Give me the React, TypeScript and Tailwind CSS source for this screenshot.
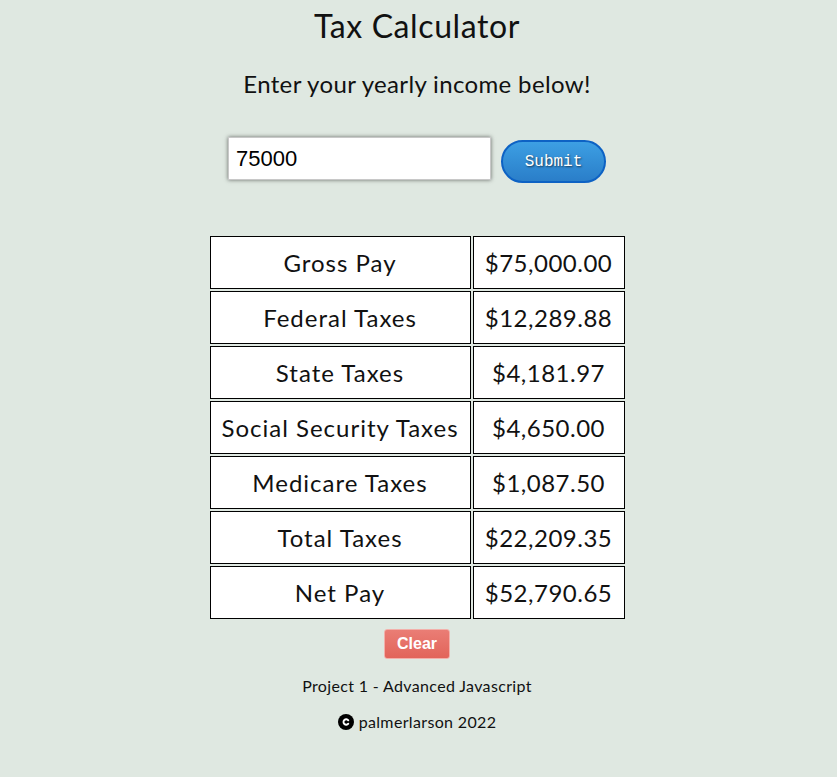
import React, { useState } from "react"

const fmt = (n: number) =>
  "$" + n.toLocaleString("en-US", { minimumFractionDigits: 2, maximumFractionDigits: 2 })

export default function App() {
  const [income, setIncome] = useState("75000")

  const rows: [string, number][] = [
    ["Gross Pay", 75000],
    ["Federal Taxes", 12289.88],
    ["State Taxes", 4181.97],
    ["Social Security Taxes", 4650],
    ["Medicare Taxes", 1087.5],
    ["Total Taxes", 22209.35],
    ["Net Pay", 52790.65],
  ]

  return (
    <div className="min-h-[777px] pr-[3px] bg-[#dfe8e1] text-[#111] flex flex-col items-center font-['Lato','Noto_Sans',sans-serif]">
      <h1 className="pt-[6px] text-[32px] leading-[40px] font-normal tracking-[0.6px]">Tax Calculator</h1>
      <p className="mt-[23px] text-[24px] leading-[30px] tracking-[0.35px]">Enter your yearly income below!</p>

      <form
        className="mt-[38px] flex items-start gap-[10px]"
        onSubmit={e => e.preventDefault()}
      >
        <input
          className="w-[263px] h-[43px] bg-white border border-[#c8c8c8] shadow-[0_0_4px_rgba(0,0,0,0.55)] px-[7px] text-[22px] font-['Liberation_Sans',Arial,sans-serif] text-black outline-none"
          value={income}
          onChange={e => setIncome(e.target.value)}
        />
        <button
          type="submit"
          className="mt-[3px] w-[105px] h-[43px] rounded-full border-2 border-[#0d62c4] bg-gradient-to-b from-[#3d9fe3] to-[#2a7ec9] text-white text-[16px] font-['Liberation_Mono','Courier_New',monospace] [text-shadow:1px_1px_2px_rgba(0,0,0,0.6)]"
        >
          Submit
        </button>
      </form>

      <div className="mt-[53px] grid grid-cols-[261px_152px] gap-[2px]">
        {rows.map(([label, value]) => (
          <React.Fragment key={label}>
            <div className="h-[53px] bg-white border border-black flex items-center justify-center text-[24px] tracking-[1px]">
              {label}
            </div>
            <div className="h-[53px] bg-white border border-black flex items-center justify-center text-[24px] tracking-[0.5px]">
              {fmt(value)}
            </div>
          </React.Fragment>
        ))}
      </div>

      <button
        type="button"
        className="mt-[10px] w-[66px] h-[30px] rounded-[3px] border border-[#f3b0aa] bg-gradient-to-b from-[#ea7d75] to-[#e2645a] text-white text-[16px] font-bold font-['Liberation_Sans',Arial,sans-serif]"
      >
        Clear
      </button>

      <p className="mt-[15px] text-[16px] leading-[24px] tracking-[0.35px]">Project 1 - Advanced Javascript</p>
      <p className="mt-[12px] text-[16px] leading-[24px] tracking-[0.35px] flex items-center gap-[5px]">
        <svg width="16" height="16" viewBox="0 0 16 16">
          <circle cx="8" cy="8" r="8" fill="#000" />
          <path
            d="M10.3 6.3A2.7 2.7 0 1 0 10.3 9.7"
            fill="none"
            stroke="#fff"
            strokeWidth="1.9"
            strokeLinecap="round"
          />
        </svg>
        palmerlarson 2022
      </p>
    </div>
  )
}
